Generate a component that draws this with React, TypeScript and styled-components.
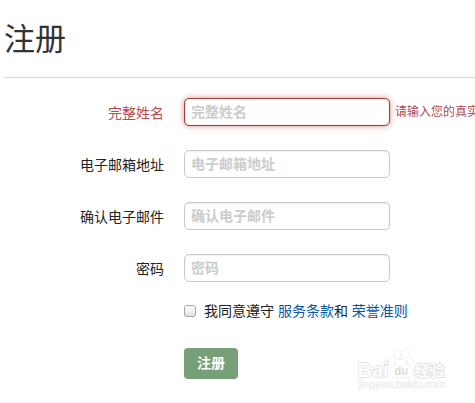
import React from "react";
import styled, { createGlobalStyle, css } from "styled-components";

const GlobalStyle = createGlobalStyle`
  * { box-sizing: border-box; }
  body {
    margin: 0;
    background: #fff;
    overflow: hidden;
    color: #222;
    font-family: "Liberation Sans", "Noto Sans CJK SC", sans-serif;
    font-size: 14px;
    line-height: 20px;
  }
`;

const Page = styled.main`
  position: relative;
  width: 475px;
  height: 403px;
  padding-left: 4px;
  overflow: hidden;
`;

const Title = styled.h1`
  height: 78px;
  margin: 0 0 20px;
  padding-top: 20px;
  border-bottom: 1px solid #d9d9d9;
  color: #333;
  font-size: 31px;
  font-weight: 400;
  line-height: 40px;
`;

const Form = styled.form`
  display: flex;
  flex-direction: column;
`;

const Field = styled.div<{ $invalid?: boolean }>`
  display: grid;
  grid-template-columns: 160px 206px max-content;
  column-gap: 20px;
  height: 28px;
  margin-bottom: 24px;
  color: ${(p) => (p.$invalid ? "#b94a48" : "#222")};
`;

const Label = styled.label`
  padding-top: 5px;
  text-align: right;
`;

const Input = styled.input<{ $invalid?: boolean }>`
  width: 206px;
  height: 28px;
  margin: 0;
  padding: 0 6px 1px;
  border: 1px solid #c8c8c8;
  border-radius: 5px;
  outline: none;
  background: #fff;
  box-shadow: inset 0 1px 1px rgba(0, 0, 0, 0.06);
  font: inherit;
  font-weight: 700;
  ${(p) =>
    p.$invalid &&
    css`
      border-color: #a23a3a;
      box-shadow: inset 0 0 1px rgba(162, 58, 58, 0.6), 0 0 6px #d59392;
    `}
  &::placeholder {
    color: #ccc;
    opacity: 1;
  }
`;

const Hint = styled.span`
  margin-left: -15px;
  padding-top: 4px;
  color: #b04a4c;
  font-size: 12px;
  white-space: nowrap;
`;

const Agreement = styled.div`
  display: flex;
  align-items: center;
  height: 20px;
  margin: -5px 0 0 180px;
  white-space: pre;
`;

const Checkbox = styled.input`
  appearance: none;
  width: 12px;
  height: 12px;
  margin: 0 8px 0 0;
  border: 1px solid #a5a5a5;
  border-radius: 3px;
  background: linear-gradient(#fff, #e2e2e2);
`;

const Link = styled.a`
  color: #0a56a5;
  text-decoration: none;
`;

const Submit = styled.button`
  width: 54px;
  height: 31px;
  margin: 27px 0 0 180px;
  padding: 0 0 1px;
  border: 0;
  border-radius: 4px;
  background: #779f78;
  color: #fff;
  font: inherit;
  font-weight: 700;
`;

const Watermark = styled.svg`
  position: absolute;
  left: 350px;
  top: 340px;
`;

const fields = [
  { id: "name", label: "完整姓名", hint: "请输入您的真实姓名" },
  { id: "email", label: "电子邮箱地址" },
  { id: "confirm", label: "确认电子邮件" },
  { id: "password", label: "密码" },
];

function BaiduMark() {
  return (
    <Watermark width="125" height="63" viewBox="0 0 125 63">
      <g
        fill="#fff"
        stroke="#dedede"
        strokeWidth="1.6"
        strokeLinejoin="round"
        paintOrder="stroke"
        fontFamily="Liberation Sans, Noto Sans CJK SC, sans-serif"
      >
        <text x="7.5" y="37" fontSize="21" fontWeight="700" textLength="31" lengthAdjust="spacingAndGlyphs">Bai</text>
        <g strokeWidth="1" stroke="#e2e2e2">
          <ellipse cx="41.5" cy="20.5" rx="3.3" ry="4.2" transform="rotate(-12 41.5 20.5)" />
          <ellipse cx="47.6" cy="13.7" rx="3.3" ry="4.6" />
          <ellipse cx="55.4" cy="13.9" rx="3.3" ry="4.6" transform="rotate(9 55.4 13.9)" />
          <ellipse cx="60.8" cy="21.5" rx="3.2" ry="4.3" transform="rotate(12 60.8 21.5)" />
          <path d="M51.3 19.5c-3.4 0-4.3 3.5-7.9 6.6-3.3 2.8-4.5 6.6-2.5 9.3 2.5 3.3 6.4 1.8 10.4 1.8s8.2 1.2 10.5-1.9c2.1-2.9.6-6.7-2.4-9.2-3.6-3-4.8-6.6-8.1-6.6z" />
        </g>
        <text x="44.5" y="35" fontSize="13" fontWeight="700" textLength="13.5" lengthAdjust="spacingAndGlyphs" fill="#dcdcdc" stroke="none">du</text>
        <text x="64.5" y="35.5" fontSize="15" fontWeight="700" textLength="30" lengthAdjust="spacingAndGlyphs" strokeWidth="1.5">经验</text>
        <text x="8.5" y="48" fontSize="11" textLength="87" lengthAdjust="spacingAndGlyphs" fill="#f1f1f1" stroke="#f1f1f1" strokeWidth="0.8">jingyan.baidu.com</text>
      </g>
    </Watermark>
  );
}

export default function App() {
  return (
    <>
      <GlobalStyle />
      <Page>
        <Title>注册</Title>
        <Form onSubmit={(e) => e.preventDefault()}>
          {fields.map((f) => (
            <Field key={f.id} $invalid={!!f.hint}>
              <Label htmlFor={f.id}>{f.label}</Label>
              <Input id={f.id} placeholder={f.label} $invalid={!!f.hint} />
              {f.hint && <Hint>{f.hint}</Hint>}
            </Field>
          ))}
          <Agreement>
            <Checkbox type="checkbox" id="agree" />
            <label htmlFor="agree">我同意遵守 </label>
            <Link href="#">服务条款</Link>和 <Link href="#">荣誉准则</Link>
          </Agreement>
          <Submit type="submit">注册</Submit>
        </Form>
        <BaiduMark />
      </Page>
    </>
  );
}
